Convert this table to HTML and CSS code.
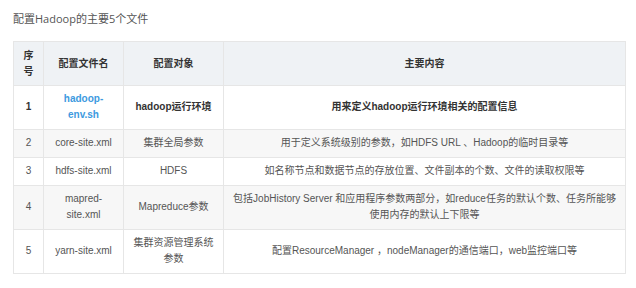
FILE: index.html
```html
<!DOCTYPE html>
<html lang="zh">
<head>
<meta charset="utf-8">
<link rel="stylesheet" href="styles.css">
</head>
<body>
<div class="page">
  <h1 class="title">配置Hadoop的主要5个文件</h1>
  <table class="conf">
    <colgroup>
      <col class="c-no"><col class="c-file"><col class="c-obj"><col class="c-desc">
    </colgroup>
    <thead>
      <tr><th>序号</th><th>配置文件名</th><th>配置对象</th><th>主要内容</th></tr>
    </thead>
    <tbody>
      <tr class="strong">
        <td>1</td>
        <td><a class="link" href="#">hadoop-env.sh</a></td>
        <td>hadoop运行环境</td>
        <td>用来定义hadoop运行环境相关的配置信息</td>
      </tr>
      <tr class="alt">
        <td>2</td><td>core-site.xml</td><td>集群全局参数</td>
        <td>用于定义系统级别的参数，如HDFS URL 、Hadoop的临时目录等</td>
      </tr>
      <tr>
        <td>3</td><td>hdfs-site.xml</td><td>HDFS</td>
        <td>如名称节点和数据节点的存放位置、文件副本的个数、文件的读取权限等</td>
      </tr>
      <tr class="alt">
        <td>4</td><td>mapred-site.xml</td><td>Mapreduce参数</td>
        <td>包括JobHistory Server 和应用程序参数两部分，如reduce任务的默认个数、任务所能够使用内存的默认上下限等</td>
      </tr>
      <tr>
        <td>5</td><td>yarn-site.xml</td><td>集群资源管理系统参数</td>
        <td>配置ResourceManager ，nodeManager的通信端口，web监控端口等</td>
      </tr>
    </tbody>
  </table>
</div>
</body>
</html>
```
FILE: styles.css
```css
html, body {
  margin: 0;
  padding: 0;
  background: #fff;
}
.page {
  padding: 11px 11px 0 13px;
  font-family: "Liberation Sans", "Noto Sans CJK SC", sans-serif;
}
.title {
  margin: 0 0 14px 0;
  font-family: "Open Sans", "Noto Sans CJK SC", sans-serif;
  font-size: 11px;
  line-height: 16px;
  font-weight: normal;
  color: #555;
}
.conf {
  width: 612px;
  table-layout: fixed;
  border-collapse: collapse;
  border: 1px solid #e6e6e6;
  font-size: 10px;
  line-height: 16px;
  color: #555;
}
.c-no { width: 30px; }
.c-file { width: 80px; }
.c-obj { width: 100px; }
.c-desc { width: 402px; }
.conf th, .conf td {
  border: 1px solid #e6e6e6;
  padding: 5px 8px 6px;
  text-align: center;
  vertical-align: middle;
}
.conf th {
  background: #eff2f5;
  color: #333;
  font-weight: bold;
  font-family: "Noto Sans CJK SC", sans-serif;
}
.conf th:first-child { padding-left: 7px; padding-right: 7px; }
.conf .alt td { background: #f7f7f7; }
.conf .strong td {
  font-weight: bold;
  color: #333;
  font-family: "Liberation Sans", "Noto Sans CJK SC", sans-serif;
}
.link {
  color: #3d9ae0;
  text-decoration: none;
}
```
